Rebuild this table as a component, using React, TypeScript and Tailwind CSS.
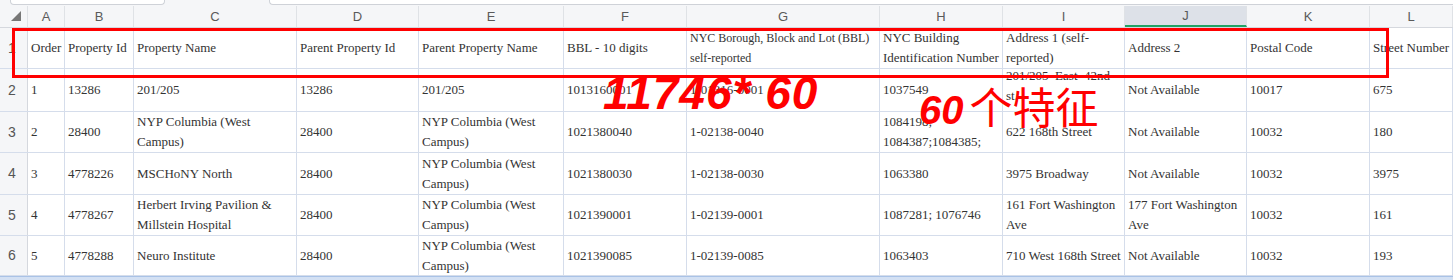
import React from "react";

const serif = "font-['Liberation_Serif','Times_New_Roman',serif]";
const sans = "font-['Liberation_Sans',Arial,sans-serif]";

const widths = [37, 69, 163, 122, 145, 123, 193, 123, 122, 122, 123, 83];
const letters = ["A", "B", "C", "D", "E", "F", "G", "H", "I", "J", "K", "L"];

const header = [
  "Order",
  "Property Id",
  "Property Name",
  "Parent Property Id",
  "Parent Property Name",
  "BBL - 10 digits",
  "NYC Borough, Block and Lot (BBL)\nself-reported",
  "NYC Building\nIdentification Number",
  "Address 1 (self-\nreported)",
  "Address 2",
  "Postal Code",
  "Street Number",
];

const nyp = "NYP Columbia (West\nCampus)";

const rows: { h: number; cells: string[] }[] = [
  {
    h: 43,
    cells: ["1", "13286", "201/205", "13286", "201/205", "1013160001", "1-01316-0001", "1037549", "201/205  East  42nd\nst.", "Not Available", "10017", "675"],
  },
  {
    h: 41,
    cells: ["2", "28400", nyp, "28400", nyp, "1021380040", "1-02138-0040", "1084198;\n1084387;1084385;", "622 168th Street", "Not Available", "10032", "180"],
  },
  {
    h: 42,
    cells: ["3", "4778226", "MSCHoNY North", "28400", nyp, "1021380030", "1-02138-0030", "1063380", "3975 Broadway", "Not Available", "10032", "3975"],
  },
  {
    h: 41,
    cells: ["4", "4778267", "Herbert Irving Pavilion &\nMillstein Hospital", "28400", nyp, "1021390001", "1-02139-0001", "1087281; 1076746", "161 Fort Washington\nAve", "177 Fort Washington\nAve", "10032", "161"],
  },
  {
    h: 40,
    cells: ["5", "4778288", "Neuro Institute", "28400", nyp, "1021390085", "1-02139-0085", "1063403", "710 West 168th Street", "Not Available", "10032", "193"],
  },
];

function Cell(props: { w: number; text: string; top?: boolean; small?: boolean }) {
  return (
    <div
      className={`flex shrink-0 border-r border-[#d5ddeb] px-[3px] leading-[20px] text-[#333] whitespace-pre ${serif} ${
        props.small ? "text-[12px]" : "text-[13px]"
      } ${props.top ? "items-start -mt-[3px]" : "items-center"}`}
      style={{ width: props.w }}
    >
      <span>{props.text}</span>
    </div>
  );
}

function RowHead(props: { n: string }) {
  return (
    <div className={`flex w-[28px] shrink-0 items-center border-r border-[#d5d8de] bg-[#f5f6f8] pl-[8px] text-[14px] text-[#555] ${sans}`}>
      {props.n}
    </div>
  );
}

export default function App() {
  return (
    <div className="relative h-[280px] w-[1453px] overflow-hidden bg-white">
      {/* top strip */}
      <div className="flex h-[6px] bg-[#f5f6f8]">
        <div className="ml-[10px] h-[5px] w-[155px] rounded-b-[4px] border border-t-0 border-[#cfd2d8] bg-white" />
        <div className="ml-[104px] h-[5px] flex-1 rounded-bl-[4px] border border-t-0 border-r-0 border-[#cfd2d8] bg-white" />
      </div>

      {/* column letters */}
      <div className="flex h-[22px] border-b border-[#d5d8de] bg-[#f5f6f8]">
        <div className="flex w-[28px] shrink-0 items-end justify-end border-r border-[#dfe2e6] pb-[6px] pr-[6px]">
          <div className="h-0 w-0 border-b-[10px] border-l-[10px] border-b-[#777] border-l-transparent" />
        </div>
        {letters.map((l, i) => (
          <div
            key={l}
            className={`flex shrink-0 items-center justify-center border-r border-[#dfe2e6] text-[13px] text-[#5a5a5a] ${sans} ${
              l === "J" ? "border-b-2 border-b-[#21a366] bg-[#dde1e8]" : ""
            }`}
            style={{ width: widths[i] }}
          >
            {l}
          </div>
        ))}
      </div>

      {/* header row */}
      <div className="flex h-[41px] border-b border-[#d5ddeb]">
        <RowHead n="1" />
        {header.map((t, i) => (
          <Cell key={t} w={widths[i]} text={t} small={i === 6} />
        ))}
      </div>

      {rows.map((r, ri) => (
        <div key={r.cells[0]} className="flex border-b border-[#d5ddeb]" style={{ height: r.h }}>
          <RowHead n={String(Number(r.cells[0]) + 1)} />
          {r.cells.map((t, i) => (
            <Cell key={i} w={widths[i]} text={t} top={ri === 0 && i === 8} />
          ))}
        </div>
      ))}

      {/* bottom strip */}
      <div className="h-[4px] border-t border-[#a9c2e6] bg-[#d3e0f3]" />

      {/* annotations */}
      <div className="absolute left-[12px] top-[28px] h-[50px] w-[1377px] border-[3px] border-[#ff0000]" />
      <div className={`absolute left-[603px] top-[68px] text-[46px] font-bold italic leading-[50px] tracking-[1px] text-[#ff0000] ${sans}`}>
        11746* 60
      </div>
      <div className="absolute left-[919px] top-[80px] flex items-baseline leading-[50px] text-[#ff0000]">
        <span className={`text-[40px] font-bold italic ${sans}`}>60</span>
        <span className="ml-[6px] text-[43px] font-['Noto_Sans_CJK_SC',sans-serif]">个特征</span>
      </div>
    </div>
  );
}
